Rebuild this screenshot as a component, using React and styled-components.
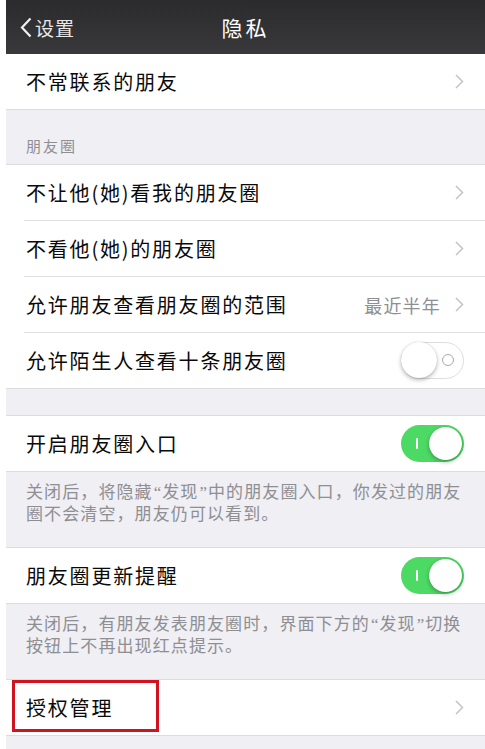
import React from "react";
import styled, { createGlobalStyle } from "styled-components";

const Global = createGlobalStyle`
  html, body { margin: 0; padding: 0; background: #ffffff; }
  body { font-family: "Noto Sans CJK SC", "Noto Sans", sans-serif; }
`;

const Page = styled.div`
  width: 485px;
  height: 749px;
  overflow: hidden;
  padding-left: 6px;
  box-sizing: border-box;
  background: #ffffff;
`;

const Screen = styled.div`
  background: #efeff4;
  height: 100%;
  display: flex;
  flex-direction: column;
`;

const NavBar = styled.div`
  height: 54px;
  flex: none;
  background: linear-gradient(#2b2b2d, #39393b);
  display: grid;
  grid-template-columns: 1fr auto 1fr;
  align-items: center;
  color: #fff;
`;

const Back = styled.div`
  display: flex;
  align-items: center;
  gap: 3px;
  padding-left: 14px;
  font-size: 19px;
  letter-spacing: 1px;
  color: #e8e8e8;
`;

const Title = styled.div`
  font-size: 21px;
  letter-spacing: 3px;
  color: #fff;
`;

const Group = styled.div`
  background: #fff;
  border-top: ${(p) => (p.$top ? "1px solid #dcdce0" : "none")};
  border-bottom: 1px solid #dcdce0;
`;

const Row = styled.div`
  position: relative;
  height: 55px;
  display: flex;
  align-items: center;
  padding: 0 21px 0 20px;
  & + & {
    border-top: 1px solid #e0e0e4;
    margin-left: 18px;
    padding-left: 2px;
  }
`;

const Label = styled.div`
  flex: 1;
  font-size: 20px;
  letter-spacing: 1.8px;
  color: #0a0a0a;
`;

const Value = styled.div`
  font-size: 18px;
  letter-spacing: 1.2px;
  color: #8e8e93;
  margin-right: 14px;
`;

const Chevron = () => (
  <svg width="9" height="15" viewBox="0 0 9 15">
    <path d="M1 1l6.5 6.5L1 14" fill="none" stroke="#c4c4c8" strokeWidth="1.5" />
  </svg>
);

const SectionHeader = styled.div`
  height: 54px;
  display: flex;
  align-items: flex-end;
  padding: 0 0 8px 20px;
  font-size: 15px;
  letter-spacing: 2px;
  color: #8e8e93;
  box-sizing: border-box;
`;

const Spacer = styled.div`
  height: ${(p) => p.$h}px;
  flex: none;
`;

const Footer = styled.div`
  height: 75px;
  box-sizing: border-box;
  padding: 9px 14px 0 20px;
  font-size: 17px;
  line-height: 20px;
  letter-spacing: 1.1px;
  color: #8e8e93;
`;

const Quote = styled.span`
  font-family: "Liberation Serif", serif;
  letter-spacing: 0;
  margin: 0 1px;
`;

const SwitchTrack = styled.div`
  width: 63px;
  height: 37px;
  border-radius: 19px;
  box-sizing: border-box;
  position: relative;
  background: ${(p) => (p.$on ? "#4cd964" : "#fff")};
  border: ${(p) => (p.$on ? "none" : "1.5px solid #dedee2")};
`;

const Knob = styled.div`
  position: absolute;
  top: ${(p) => (p.$on ? "2px" : "-1px")};
  left: ${(p) => (p.$on ? "28px" : "-1px")};
  width: ${(p) => (p.$on ? "33px" : "36px")};
  height: ${(p) => (p.$on ? "33px" : "36px")};
  border-radius: 50%;
  background: #fff;
  box-shadow: 0 2px 4px rgba(0, 0, 0, 0.28), 0 0 1px rgba(0, 0, 0, 0.2);
`;

const OnMark = styled.div`
  position: absolute;
  left: 15px;
  top: 13px;
  width: 2px;
  height: 11px;
  background: #fff;
  border-radius: 1px;
`;

const OffMark = styled.div`
  position: absolute;
  right: 9px;
  top: 11px;
  width: 10px;
  height: 10px;
  border-radius: 50%;
  border: 1.5px solid #a8a8ad;
`;

const Switch = ({ on }) => (
  <SwitchTrack $on={on}>
    {on ? <OnMark /> : <OffMark />}
    <Knob $on={on} />
  </SwitchTrack>
);

const Highlight = styled.div`
  position: absolute;
  left: 6px;
  top: 0;
  width: 147px;
  height: 52px;
  border: 3px solid #d0131f;
  box-sizing: border-box;
`;

export default function App() {
  return (
    <Page>
      <Global />
      <Screen>
        <NavBar>
          <Back>
            <svg width="12" height="21" viewBox="0 0 12 21">
              <path d="M10.5 1.5L2 10.5l8.5 9" fill="none" stroke="#f0f0f0" strokeWidth="2.2" />
            </svg>
            <span>设置</span>
          </Back>
          <Title>隐私</Title>
          <div />
        </NavBar>

        <Group>
          <Row>
            <Label>不常联系的朋友</Label>
            <Chevron />
          </Row>
        </Group>

        <SectionHeader>朋友圈</SectionHeader>

        <Group $top>
          <Row>
            <Label>不让他(她)看我的朋友圈</Label>
            <Chevron />
          </Row>
          <Row>
            <Label>不看他(她)的朋友圈</Label>
            <Chevron />
          </Row>
          <Row>
            <Label>允许朋友查看朋友圈的范围</Label>
            <Value>最近半年</Value>
            <Chevron />
          </Row>
          <Row>
            <Label>允许陌生人查看十条朋友圈</Label>
            <Switch on={false} />
          </Row>
        </Group>

        <Spacer $h={26} />

        <Group $top>
          <Row>
            <Label>开启朋友圈入口</Label>
            <Switch on />
          </Row>
        </Group>
        <Footer>
          关闭后，将隐藏<Quote>“</Quote>发现<Quote>”</Quote>中的朋友圈入口，你发过的朋友圈不会清空，朋友仍可以看到。
        </Footer>

        <Group $top>
          <Row>
            <Label>朋友圈更新提醒</Label>
            <Switch on />
          </Row>
        </Group>
        <Footer>
          关闭后，有朋友发表朋友圈时，界面下方的<Quote>“</Quote>发现<Quote>”</Quote>切换按钮上不再出现红点提示。
        </Footer>

        <Group $top>
          <Row>
            <Highlight />
            <Label>授权管理</Label>
            <Chevron />
          </Row>
        </Group>
      </Screen>
    </Page>
  );
}
